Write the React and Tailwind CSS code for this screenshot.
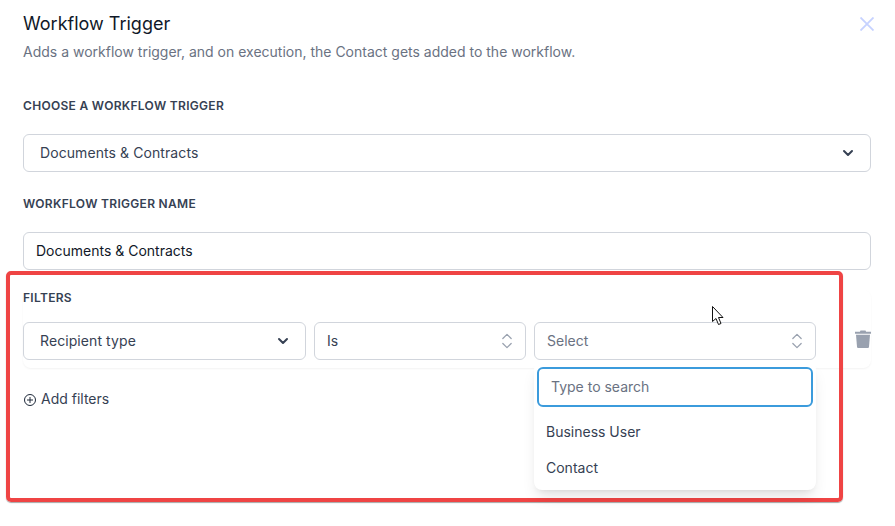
import { ChevronDown, ChevronsUpDown } from "lucide-react";

const Label = ({ children, className = "" }) => (
  <div className={`text-xs font-semibold uppercase leading-4 tracking-[0.025em] text-gray-700 ${className}`}>
    {children}
  </div>
);

const App = () => {
  return (
    <div className="relative h-[526px] w-[895px] overflow-hidden bg-white pl-[23px] pr-[24px] pt-[13px] font-['Inter',sans-serif]">
      <div className="flex items-start justify-between">
        <h1 className="text-lg font-normal leading-[22px] text-gray-900">Workflow Trigger</h1>
        <svg viewBox="0 0 14 14" className="mr-[-3px] mt-1 h-[14px] w-[14px] text-indigo-200" fill="none" stroke="currentColor" strokeWidth="1.8">
          <path d="M0.5 0.5l13 13M13.5 0.5l-13 13" />
        </svg>
      </div>
      <p className="mt-[7px] text-sm leading-5 text-gray-500">
        Adds a workflow trigger, and on execution, the Contact gets added to the workflow.
      </p>

      <Label className="mt-9">Choose a workflow trigger</Label>
      <div className="mt-5 flex h-[38px] items-center justify-between rounded-md border border-gray-300 pl-4 pr-[14px] text-sm tracking-[0.006em] text-gray-700">
        Documents &amp; Contracts
        <ChevronDown className="h-4 w-4 text-gray-700" strokeWidth={3} />
      </div>

      <Label className="mt-6">Workflow trigger name</Label>
      <div className="mt-5 flex h-[38px] items-center rounded-md border border-gray-300 px-3 text-sm text-gray-900">
        Documents &amp; Contracts
      </div>

      <div className="mt-5 rounded-lg pb-2 shadow-[0_1px_2px_rgba(0,0,0,0.05)]">
        <Label>Filters</Label>
        <div className="mt-4 flex items-start gap-2">
          <div className="flex h-[38px] w-[283px] shrink-0 items-center justify-between rounded-md border border-gray-300 pl-4 pr-[14px] text-sm tracking-[0.006em] text-gray-700">
            Recipient type
            <ChevronDown className="h-4 w-4 text-gray-700" strokeWidth={3} />
          </div>
          <div className="flex h-[38px] w-[212px] shrink-0 items-center justify-between rounded-md border border-gray-300 pl-3 pr-2 text-sm text-gray-700">
            Is
            <ChevronsUpDown className="h-5 w-5 text-gray-400" strokeWidth={1.5} />
          </div>
          <div className="relative w-[282px] shrink-0">
            <div className="flex h-[38px] items-center justify-between rounded-md border border-gray-300 pl-3 pr-2 text-sm text-gray-500">
              Select
              <ChevronsUpDown className="h-5 w-5 text-gray-400" strokeWidth={1.5} />
            </div>
            <div className="absolute left-0 right-0 top-10 z-10 rounded-lg bg-white px-[3px] pb-1 pt-[5px] shadow-lg">
              <div className="flex h-10 items-center rounded-md border-2 border-[#3b9bdc] px-3 text-sm text-gray-500">
                Type to search
              </div>
              <div className="mt-[7px] flex h-9 items-center px-[9px] text-sm text-gray-700">Business User</div>
              <div className="flex h-9 items-center px-[9px] text-sm text-gray-700">Contact</div>
            </div>
          </div>
          <svg viewBox="0 0 16 18" className="ml-[31px] mt-2 h-[18px] w-4 shrink-0 text-gray-400" fill="currentColor">
            <path d="M5.5 0.5h5l.6 1.2H16v2H0v-2h4.900z" />
            <path d="M1 4.700h14l-1 12c-.1.800-.6 1.300-1.400 1.300H3.400c-.8 0-1.300-.5-1.400-1.300z" />
          </svg>
        </div>
      </div>

      <div className="ml-px mt-[21px] flex items-center gap-[5px] text-sm text-gray-700">
        <svg viewBox="0 0 12 12" className="mt-px h-3 w-3 text-gray-800" fill="none" stroke="currentColor" strokeWidth="1">
          <circle cx="6" cy="6" r="5.500" />
          <path d="M6 3v6M3 6h6" />
        </svg>
        Add filters
      </div>

      {/* red annotation box */}
      <div className="pointer-events-none absolute left-[6px] top-[271px] h-[231px] w-[837px] rounded-[5px] border-4 border-[#ef4444] shadow-[0_1px_1px_rgba(0,0,0,0.35)]" />

      {/* mouse cursor */}
      <svg viewBox="0 0 13 20" className="absolute left-[712px] top-[306px] h-5 w-[13px]" fill="white" stroke="#111" strokeWidth="1">
        <path d="M0.5 0.5v15l3.500-3 2.500 6 2.500-1-2.500-6h4.500z" />
      </svg>
    </div>
  );
};

export default App;
